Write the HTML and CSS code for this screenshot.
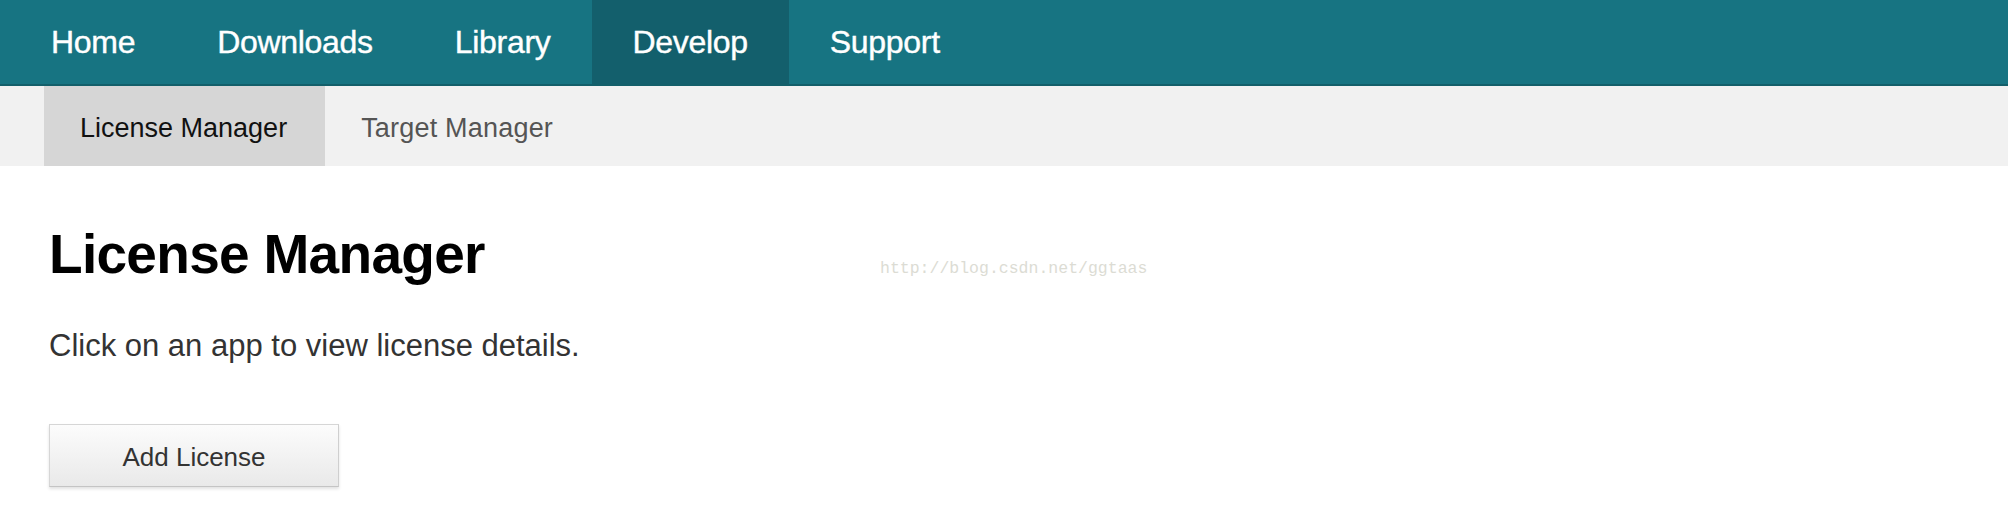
FILE: index.html
```html
<!DOCTYPE html>
<html lang="en">
<head>
<meta charset="utf-8">
<title>License Manager</title>
<link rel="stylesheet" href="styles.css">
</head>
<body>
<header class="topnav">
  <a class="topnav-item" href="#">Home</a>
  <a class="topnav-item" href="#">Downloads</a>
  <a class="topnav-item" href="#">Library</a>
  <a class="topnav-item is-active" href="#">Develop</a>
  <a class="topnav-item" href="#">Support</a>
</header>
<nav class="subnav">
  <a class="subnav-item is-active" href="#">License Manager</a>
  <a class="subnav-item" href="#">Target Manager</a>
</nav>
<main class="content">
  <h1 class="title">License Manager</h1>
  <p class="lead">Click on an app to view license details.</p>
  <button class="btn" type="button">Add License</button>
  <span class="watermark">http://blog.csdn.net/ggtaas</span>
</main>
</body>
</html>
```
FILE: styles.css
```css
* { box-sizing: border-box; }
html, body { margin: 0; padding: 0; background: #fff; }
body { font-family: "Liberation Sans", Arial, sans-serif; width: 2008px; height: 520px; overflow: hidden; }
a { text-decoration: none; }

.topnav {
  display: flex;
  height: 86px;
  padding-left: 10px;
  background: #177482;
  border-bottom: 2px solid #135f6a;
}
.topnav-item {
  display: block;
  padding: 0 41px;
  color: #fff;
  font-size: 32px;
  line-height: 84px;
  letter-spacing: -0.3px;
  -webkit-text-stroke: 0.4px #fff;
}
.topnav-item.is-active { background: #135f6c; }

.subnav {
  display: flex;
  height: 80px;
  padding-left: 44px;
  background: #f1f1f1;
}
.subnav-item {
  display: block;
  padding: 5px 39px 0 36px;
  color: #555;
  font-size: 27px;
  line-height: 75px;
  letter-spacing: 0.2px;
}
.subnav-item.is-active { background: #d6d6d6; color: #111; padding-right: 38px; letter-spacing: 0; }

.content {
  position: relative;
  padding: 55px 0 0 49px;
}
.title {
  margin: 0;
  font-size: 55px;
  line-height: 66px;
  font-weight: 700;
  letter-spacing: -0.7px;
  color: #000;
}
.lead {
  margin: 39px 0 0;
  font-size: 31px;
  line-height: 40px;
  color: #333;
}
.btn {
  display: block;
  margin-top: 58px;
  width: 290px;
  height: 63px;
  padding: 3px 0 0;
  font-family: "Liberation Sans", Arial, sans-serif;
  font-size: 26px;
  color: #333;
  background: linear-gradient(#fcfcfc, #e9e9e9);
  border: 1px solid #d6d6d6;
  border-bottom-color: #c4c4c4;
  border-right-color: #cfcfcf;
  box-shadow: 0 2px 3px rgba(0, 0, 0, 0.12);
}
.watermark {
  position: absolute;
  left: 880px;
  top: 93px;
  font-family: "Liberation Mono", monospace;
  font-size: 16.5px;
  color: #dcdcd4;
}
```
